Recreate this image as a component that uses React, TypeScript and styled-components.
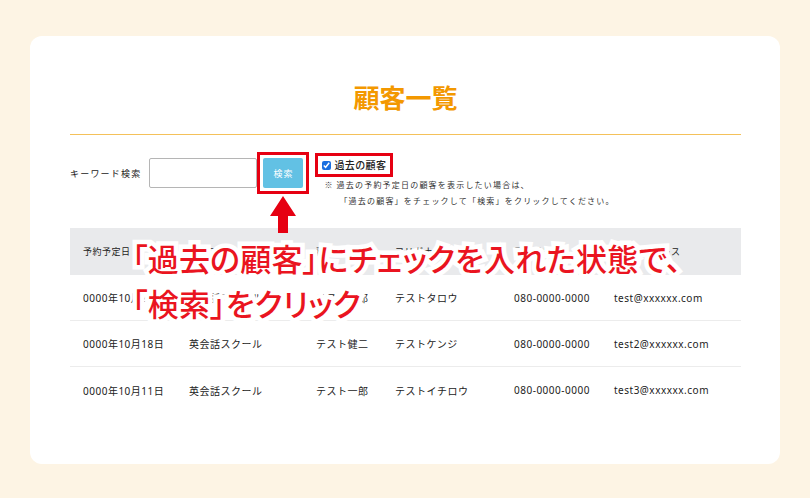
import React from "react";
import styled, { createGlobalStyle } from "styled-components";

const Global = createGlobalStyle`
  html, body { margin: 0; padding: 0; }
  body {
    background: #fdf4e4;
    font-family: "Noto Sans", "Noto Sans CJK JP", sans-serif;
    color: #222;
  }
`;

const Page = styled.div`
  width: 810px;
  height: 498px;
  box-sizing: border-box;
  padding: 36px 30px 34px 30px;
`;

const Card = styled.div`
  background: #fff;
  border-radius: 12px;
  height: 428px;
  box-sizing: border-box;
  padding: 43px 39px 0 40px;
`;

const Header = styled.div`
  border-bottom: 1px solid #f4c15a;
  padding-bottom: 19px;
  text-align: center;
`;

const Title = styled.h1`
  margin: 0;
  font-family: "Noto Sans CJK JP", sans-serif;
  font-size: 26px;
  line-height: 36px;
  font-weight: 700;
  color: #f39800;
`;

const SearchArea = styled.div`
  display: flex;
  align-items: flex-start;
  margin-top: 17px;
  gap: 6px;
`;

const SearchGroup = styled.div`
  display: flex;
  align-items: center;
`;

const Label = styled.span`
  font-family: "Noto Sans CJK JP", sans-serif;
  font-size: 9px;
  letter-spacing: 1.2px;
  margin-right: 8px;
  color: #222;
  white-space: nowrap;
`;

const Input = styled.input`
  width: 108px;
  height: 30px;
  box-sizing: border-box;
  border: 1px solid #b5b5b5;
  border-radius: 2px;
  margin: 0;
  padding: 0 6px;
  background: #fff;
`;

const Highlight = styled.div<{ $pad: number }>`
  position: relative;
  border: 3px solid #e60012;
  padding: ${(p) => p.$pad}px;
  display: flex;
  align-items: center;
`;

const Button = styled.button`
  width: 40px;
  height: 30px;
  border: none;
  border-radius: 2px;
  background: #62c1e4;
  color: #fff;
  font-family: "Noto Sans CJK JP", sans-serif;
  font-size: 9px;
  letter-spacing: 1px;
  padding: 0;
`;

const Arrow = styled.svg`
  position: absolute;
  left: 50%;
  top: calc(100% + 5px);
  transform: translateX(-50%);
  overflow: visible;
  z-index: 3;
`;

const OptionCol = styled.div`
  display: flex;
  flex-direction: column;
  align-items: flex-start;
  padding-top: 1px;
`;

const CheckLabel = styled.label`
  display: flex;
  align-items: center;
  gap: 3px;
  font-family: "Noto Sans CJK JP", sans-serif;
  font-size: 10px;
  font-weight: 500;
  letter-spacing: 0.4px;
  line-height: 14px;
  padding: 2px 4px 2px 4px;
`;

const Check = styled.input`
  width: 9px;
  height: 9px;
  margin: 0;
  accent-color: #1a6fe0;
`;

const Note = styled.p<{ $indent: number }>`
  margin: 0;
  padding-left: ${(p) => p.$indent}px;
  font-family: "Noto Sans CJK JP", sans-serif;
  font-size: 8px;
  letter-spacing: 1.2px;
  line-height: 16px;
  color: #333;
  white-space: nowrap;
`;

const TableWrap = styled.div`
  position: relative;
  margin-top: 19px;
`;

const Row = styled.div<{ $head?: boolean; $line?: boolean }>`
  display: grid;
  grid-template-columns: 106px 127px 79px 119px 100px 1fr;
  align-items: center;
  padding: 0 13px;
  height: ${(p) => (p.$head ? 47 : 46)}px;
  box-sizing: border-box;
  background: ${(p) => (p.$head ? "#e9eaec" : "transparent")};
  border-bottom: ${(p) => (p.$line ? "1px solid #ececec" : "none")};
`;

const Cell = styled.span<{ $head?: boolean }>`
  font-family: "Noto Sans", "Noto Sans CJK JP", sans-serif;
  font-size: ${(p) => (p.$head ? 9 : 10)}px;
  letter-spacing: 0.5px;
  color: #222;
  white-space: nowrap;
`;

const Callout = styled.div`
  position: absolute;
  left: 62px;
  top: 7px;
  z-index: 2;
  font-family: "Noto Sans CJK JP", sans-serif;
  font-feature-settings: "palt";
  font-size: 31px;
  font-weight: 500;
  letter-spacing: 0.2px;
  line-height: 45px;
  color: #ea1420;
  -webkit-text-stroke: 9px #fff;
  paint-order: stroke fill;
  white-space: nowrap;
`;

const headers = ["予約予定日", "コース名", "顧客名", "フリガナ", "電話番号", "メールアドレス"];
const rows = [
  ["0000年10月25日", "英会話スクール", "テスト太郎", "テストタロウ", "080-0000-0000", "test@xxxxxx.com"],
  ["0000年10月18日", "英会話スクール", "テスト健二", "テストケンジ", "080-0000-0000", "test2@xxxxxx.com"],
  ["0000年10月11日", "英会話スクール", "テスト一郎", "テストイチロウ", "080-0000-0000", "test3@xxxxxx.com"],
];

export default function App() {
  return (
    <Page>
      <Global />
      <Card>
        <Header>
          <Title>顧客一覧</Title>
        </Header>
        <SearchArea>
          <SearchGroup>
            <Label>キーワード検索</Label>
            <Input type="text" />
            <Highlight $pad={3}>
              <Button>検索</Button>
              <Arrow width="26" height="37" viewBox="0 0 26 37">
                <polygon points="13,0 26,20 18,20 18,37 8,37 8,20 0,20" fill="#e60012" />
              </Arrow>
            </Highlight>
          </SearchGroup>
          <OptionCol>
            <Highlight $pad={0}>
              <CheckLabel>
                <Check type="checkbox" checked readOnly />
                過去の顧客
              </CheckLabel>
            </Highlight>
            <Note $indent={9}>※ 過去の予約予定日の顧客を表示したい場合は、</Note>
            <Note $indent={24}>「過去の顧客」をチェックして「検索」をクリックしてください。</Note>
          </OptionCol>
        </SearchArea>
        <TableWrap>
          <Row $head>
            {headers.map((h) => (
              <Cell $head key={h}>{h}</Cell>
            ))}
          </Row>
          {rows.map((r, i) => (
            <Row key={i} $line={i < rows.length - 1}>
              {r.map((c, j) => (
                <Cell key={j}>{c}</Cell>
              ))}
            </Row>
          ))}
          <Callout>
            「過去の顧客」にチェックを入れた状態で、
            <br />
            「検索」をクリック
          </Callout>
        </TableWrap>
      </Card>
    </Page>
  );
}
